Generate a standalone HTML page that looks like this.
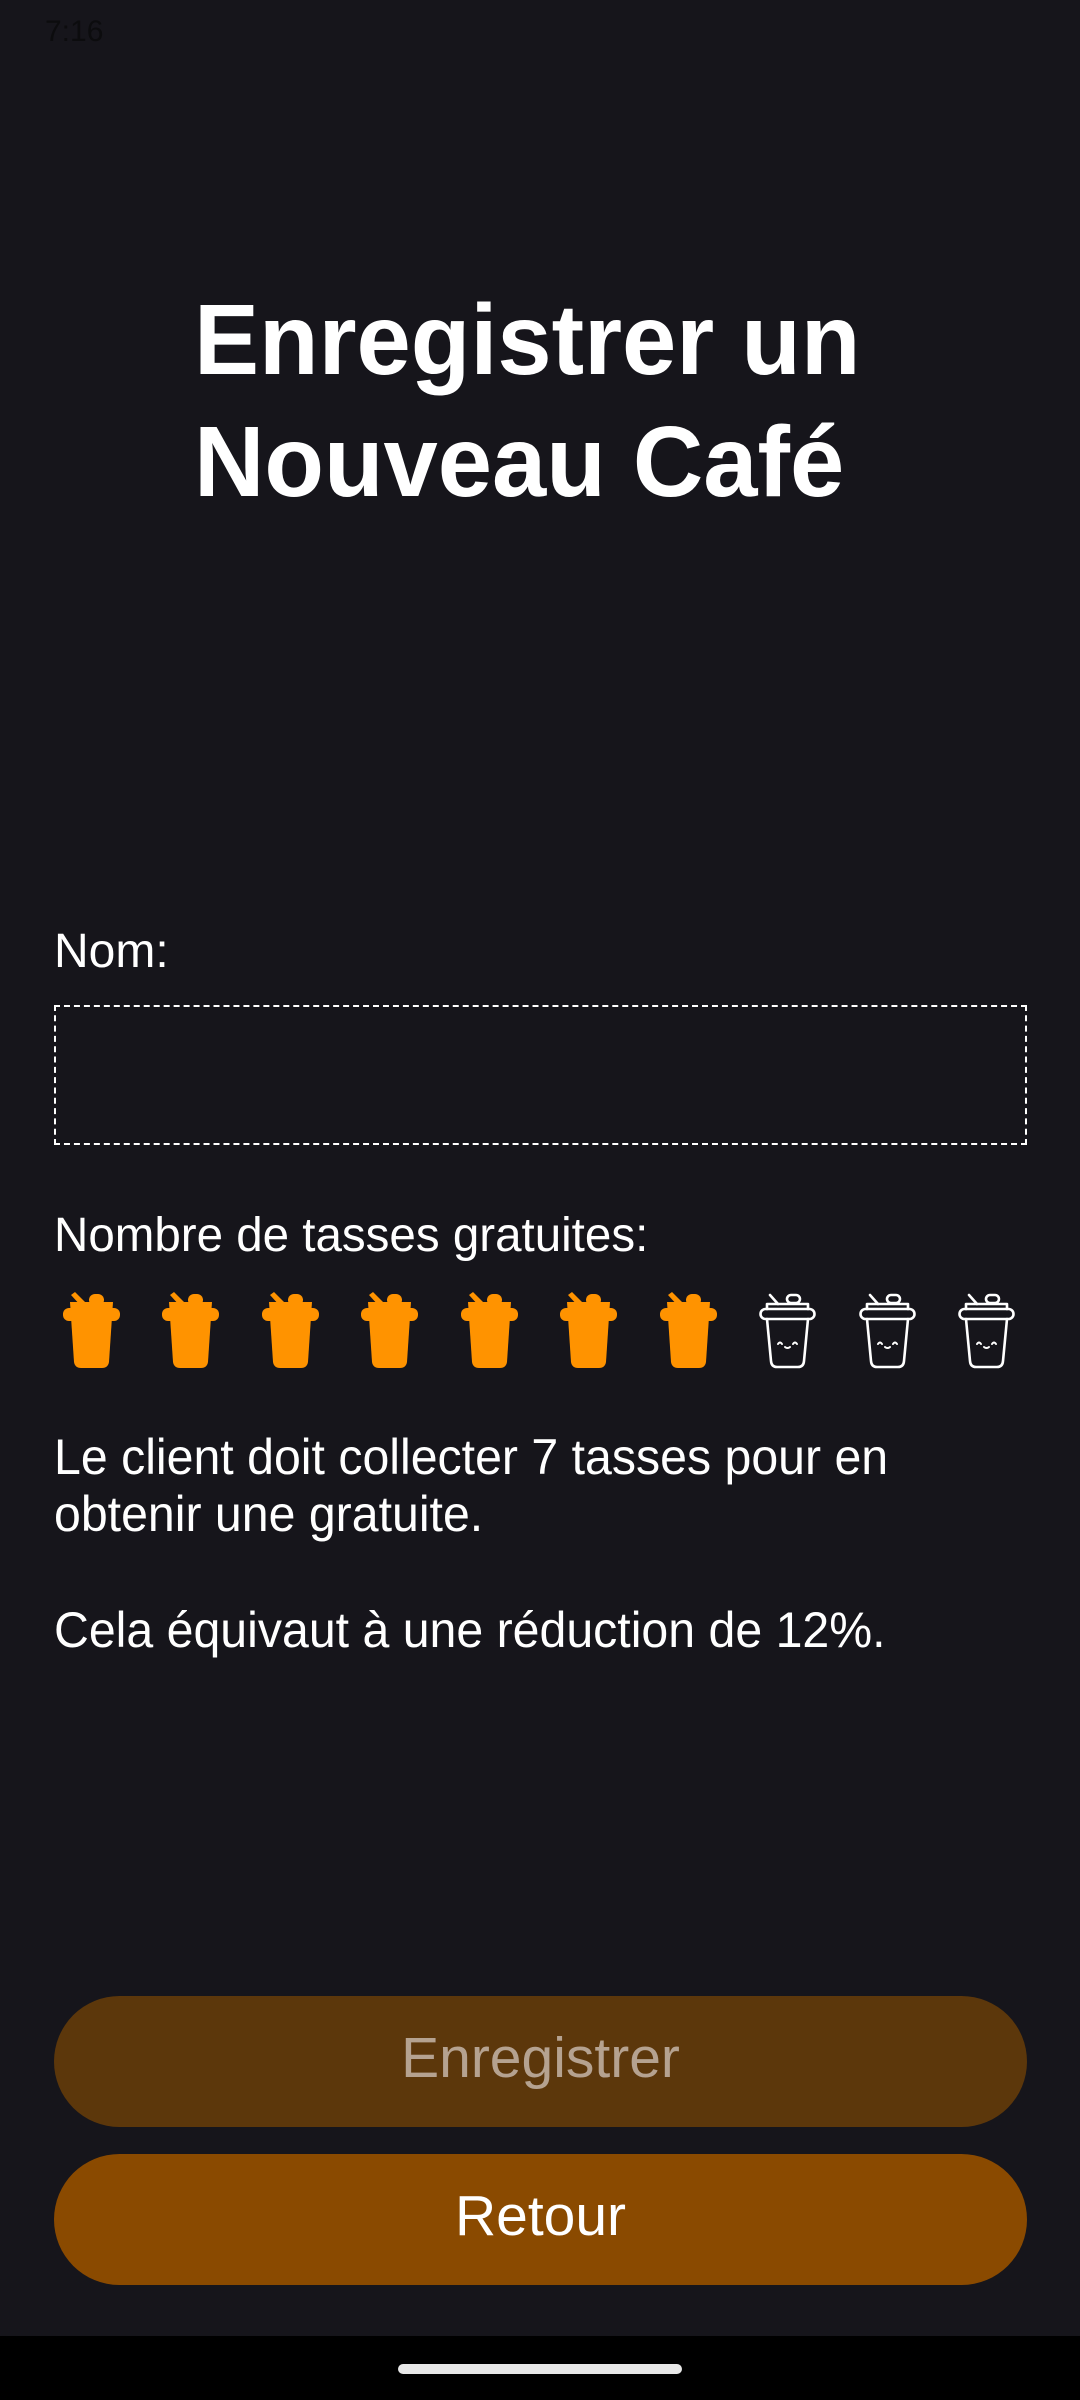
<!DOCTYPE html>
<html><head><meta charset="utf-8"><style>
html,body{margin:0;padding:0}
body{width:1080px;height:2400px;background:#16151b;position:relative;overflow:hidden;font-family:"Liberation Sans",Arial,sans-serif;color:#fff}
.a{position:absolute;white-space:nowrap;line-height:1}
.t{font-weight:bold;font-size:100px;left:194px;transform-origin:left top;transform:scaleX(0.975)}
.n{font-size:48px;left:54px;transform-origin:left top}
.box{position:absolute;left:54px;top:1005px;width:969px;height:136px;border:2px dashed #fff}
.btn{position:absolute;left:54px;width:973px;height:131px;border-radius:66px;text-align:center;line-height:124px;font-size:57px}
.cup{position:absolute;top:1292px;width:57px;height:77px}
</style></head><body>
<div class="a" style="left:45px;top:17px;font-size:30px;color:#0c0c0e">7:16</div>
<div class="a t" style="top:290px">Enregistrer un</div>
<div class="a t" style="top:412px">Nouveau Café</div>
<div class="a n" style="top:928px;transform:scaleX(1.0)">Nom:</div>
<div class="box"></div>
<div class="a n" style="top:1212px;transform:scaleX(0.99)">Nombre de tasses gratuites:</div>
<div class="a n" style="top:1432px;font-size:50px;transform:scaleX(0.965)">Le client doit collecter 7 tasses pour en</div>
<div class="a n" style="top:1489px;font-size:50px;transform:scaleX(0.965)">obtenir une gratuite.</div>
<div class="a n" style="top:1605px;font-size:50px;transform:scaleX(0.965)">Cela équivaut à une réduction de 12%.</div>

<svg width="0" height="0" style="position:absolute">
<defs>
<g id="f" fill="#ff9300">
<path d="M8 3 L12 0 L22 10 L18 14 Z"/>
<rect x="26" y="2" width="15" height="12" rx="6"/>
<rect x="0" y="16" width="57" height="13" rx="6"/>
<path d="M7 10 H50 L46 70 Q45 76 39 76 H18 Q12 76 11 70 Z"/>
</g>
<g id="o" fill="none" stroke="#fff" stroke-width="2.6" stroke-linecap="round" stroke-linejoin="round">
<path d="M11 3 L19 12"/>
<rect x="28" y="3" width="13" height="8" rx="4"/>
<path d="M8 17 V12 H49 V17"/>
<rect x="1.5" y="17" width="54" height="10" rx="5"/>
<path d="M8 27 L12 69 Q12.5 75 18 75 H39 Q44.5 75 45 69 L49 27"/>
<path d="M19 52 q2 -3 4 0 M34 52 q2 -3 4 0 M26 55 q2.5 2 5 0" stroke-width="2"/>
</g>
</defs></svg>
<svg class="cup" style="left:63px" viewBox="0 0 57 77"><use href="#f"/></svg>
<svg class="cup" style="left:162px" viewBox="0 0 57 77"><use href="#f"/></svg>
<svg class="cup" style="left:262px" viewBox="0 0 57 77"><use href="#f"/></svg>
<svg class="cup" style="left:361px" viewBox="0 0 57 77"><use href="#f"/></svg>
<svg class="cup" style="left:461px" viewBox="0 0 57 77"><use href="#f"/></svg>
<svg class="cup" style="left:560px" viewBox="0 0 57 77"><use href="#f"/></svg>
<svg class="cup" style="left:660px" viewBox="0 0 57 77"><use href="#f"/></svg>
<svg class="cup" style="left:759px" viewBox="0 0 57 77"><use href="#o"/></svg>
<svg class="cup" style="left:859px" viewBox="0 0 57 77"><use href="#o"/></svg>
<svg class="cup" style="left:958px" viewBox="0 0 57 77"><use href="#o"/></svg>

<div class="btn" style="top:1996px;background:#5c370b;color:#b5a290">Enregistrer</div>
<div class="btn" style="top:2154px;background:#8a4a00;color:#fff">Retour</div>
<div style="position:absolute;left:0;top:2336px;width:1080px;height:64px;background:#000"></div>
<div style="position:absolute;left:398px;top:2364px;width:284px;height:10px;border-radius:5px;background:#e8e8e8"></div>
</body></html>
